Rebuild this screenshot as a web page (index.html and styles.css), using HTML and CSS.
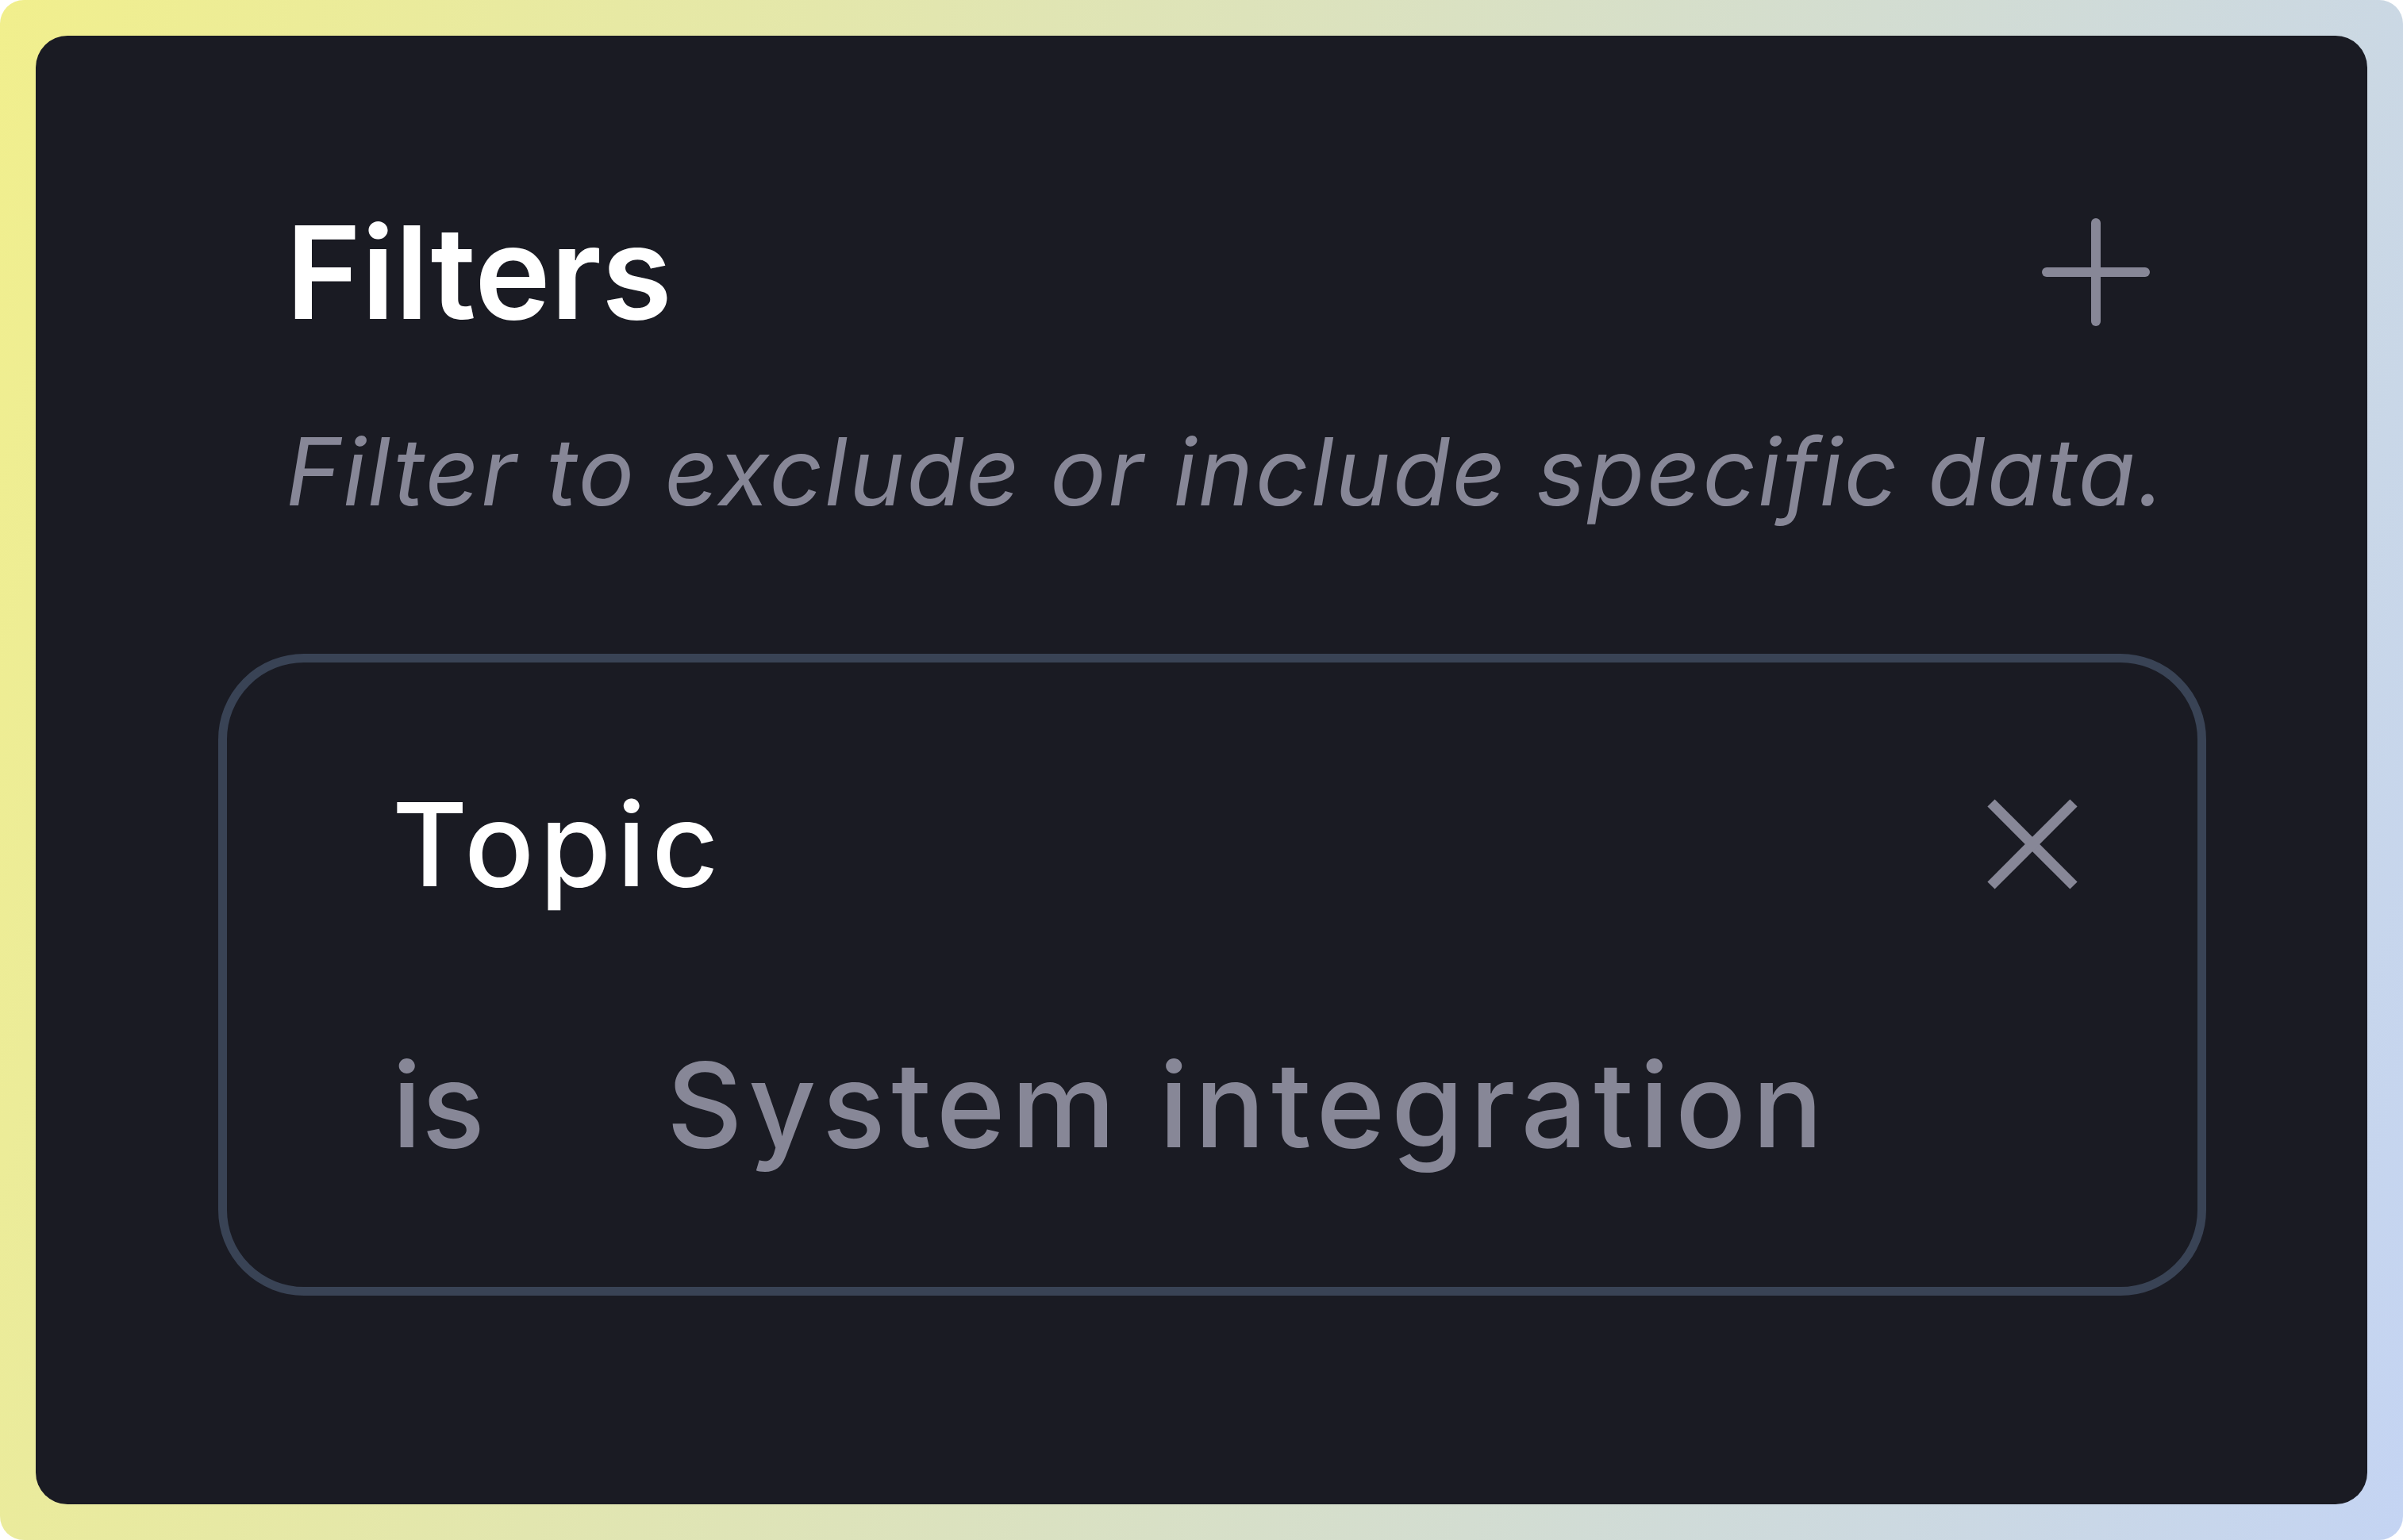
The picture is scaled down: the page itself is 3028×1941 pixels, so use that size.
FILE: index.html
```html
<!DOCTYPE html>
<html lang="en">
<head>
<meta charset="utf-8">
<title>Filters</title>
<link rel="stylesheet" href="styles.css">
</head>
<body>
<div class="frame">
  <section class="card">
    <header class="head">
      <div class="head-row">
        <h1 class="title">Filters</h1>
        <button class="icon-btn add" aria-label="Add filter">
          <svg width="148" height="148" viewBox="0 0 148 148" fill="none" stroke="currentColor" stroke-width="12" stroke-linecap="round">
            <line x1="74" y1="12" x2="74" y2="136"/>
            <line x1="12" y1="74" x2="136" y2="74"/>
          </svg>
        </button>
      </div>
      <p class="subtitle">Filter to exclude or include specific data.</p>
    </header>
    <div class="filter-box">
      <div class="filter-row">
        <span class="filter-name">Topic</span>
        <button class="icon-btn remove" aria-label="Remove filter">
          <svg width="120" height="120" viewBox="0 0 120 120" fill="none" stroke="currentColor" stroke-width="13" stroke-linecap="butt">
            <line x1="8" y1="8" x2="112" y2="112"/>
            <line x1="112" y1="8" x2="8" y2="112"/>
          </svg>
        </button>
      </div>
      <div class="filter-cond">
        <span class="op">is</span>
        <span class="val">System integration</span>
      </div>
    </div>
  </section>
</div>
</body>
</html>
```

FILE: styles.css
```css
* {
  box-sizing: border-box;
}

html,
body {
  margin: 0;
  padding: 0;
  background: #ffffff;
}

body {
  font-family: Inter, "Noto Sans", sans-serif;
}

.frame {
  width: 3028px;
  height: 1941px;
  padding: 45px;
  border-radius: 30px;
  background: linear-gradient(105deg, #f1ef8d 0%, #c4d4f3 100%);
}

.card {
  height: 100%;
  background: #1a1b23;
  border-radius: 40px;
  padding: 224px 203px 0 230px;
}

.head {
  margin: 0 65px 0 85px;
}

.head-row {
  display: flex;
  align-items: center;
  justify-content: space-between;
  height: 148px;
}

.title {
  margin: 0;
  font-size: 162px;
  line-height: 148px;
  font-weight: 600;
  color: #ffffff;
}

.icon-btn {
  display: block;
  margin: 0;
  padding: 0;
  border: 0;
  background: none;
  color: #878797;
}

.icon-btn svg {
  display: block;
}

.subtitle {
  margin: 107px 0 0;
  font-size: 118px;
  line-height: 140px;
  font-style: italic;
  font-weight: 400;
  color: #878797;
  letter-spacing: 2.4px;
  white-space: nowrap;
}

.filter-box {
  margin-top: 160px;
  border: 11px solid #394355;
  border-radius: 108px;
  padding: 169px 148px 149px 208px;
}

.filter-row {
  display: flex;
  align-items: center;
  justify-content: space-between;
  height: 120px;
}

.filter-name {
  font-size: 146px;
  line-height: 120px;
  font-weight: 500;
  color: #ffffff;
  letter-spacing: 7px;
}

.filter-cond {
  display: flex;
  margin-top: 189px;
  font-size: 148px;
  line-height: 160px;
  font-weight: 500;
  color: #878797;
}

.op {
  width: 346px;
  flex: none;
}

.val {
  letter-spacing: 7.6px;
}
```
